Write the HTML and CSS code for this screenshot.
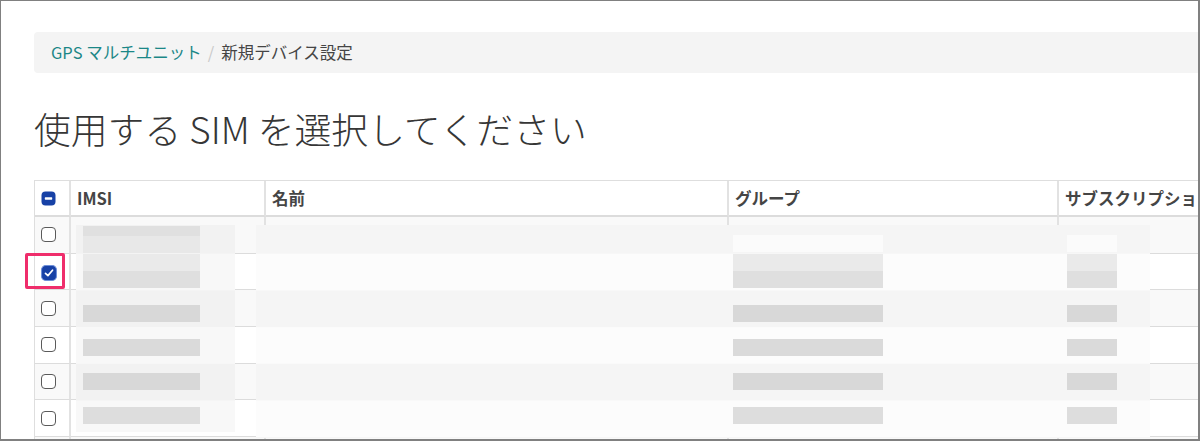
FILE: index.html
```html
<!DOCTYPE html>
<html lang="ja">
<head>
<meta charset="utf-8">
<title>新規デバイス設定</title>
<link rel="stylesheet" href="styles.css">
</head>
<body>
<div class="frame">
  <nav class="crumbs">
    <a class="crumb-link" href="#">GPS マルチユニット</a>
    <span class="sep">/</span>
    <span class="crumb-current">新規デバイス設定</span>
  </nav>

  <h1 class="title">使用する SIM を選択してください</h1>

  <div class="sim-table">
    <div class="row head">
      <div class="cell check">
        <svg class="cb" viewBox="0 0 15 15"><rect x="0.5" y="0.5" width="14" height="14" rx="4" fill="#1741a6"/><rect x="3.8" y="6.3" width="7.4" height="2.4" rx="0.6" fill="#fff"/></svg>
      </div>
      <div class="cell">IMSI</div>
      <div class="cell">名前</div>
      <div class="cell">グループ</div>
      <div class="cell">サブスクリプション</div>
    </div>

    <div class="row odd">
      <div class="cell check"><span class="box"></span></div>
      <div class="cell"></div><div class="cell"></div><div class="cell"></div><div class="cell"></div>
    </div>
    <div class="row">
      <div class="cell check">
        <svg class="cb checked" viewBox="0 0 15 15"><rect x="0.5" y="0.5" width="14" height="14" rx="4" fill="#1741a6" stroke="#6f8fd8" stroke-width="1"/><path d="M4.2 7.8 L6.5 10 L10.8 4.9" fill="none" stroke="#fff" stroke-width="1.6" stroke-linecap="round" stroke-linejoin="round"/></svg>
      </div>
      <div class="cell"></div><div class="cell"></div><div class="cell"></div><div class="cell"></div>
    </div>
    <div class="row odd">
      <div class="cell check"><span class="box"></span></div>
      <div class="cell"></div><div class="cell"></div><div class="cell"></div><div class="cell"></div>
    </div>
    <div class="row">
      <div class="cell check"><span class="box"></span></div>
      <div class="cell"></div><div class="cell"></div><div class="cell"></div><div class="cell"></div>
    </div>
    <div class="row odd">
      <div class="cell check"><span class="box"></span></div>
      <div class="cell"></div><div class="cell"></div><div class="cell"></div><div class="cell"></div>
    </div>
    <div class="row">
      <div class="cell check"><span class="box"></span></div>
      <div class="cell"></div><div class="cell"></div><div class="cell"></div><div class="cell"></div>
    </div>
    <div class="row odd">
      <div class="cell check"><span class="box"></span></div>
      <div class="cell"></div><div class="cell"></div><div class="cell"></div><div class="cell"></div>
    </div>

    <div class="redact redact-imsi">
      <div class="bar x-imsi r1 top-dark"></div>
      <div class="bar x-imsi r2 split"></div>
      <div class="bar x-imsi r3"></div>
      <div class="bar x-imsi r4"></div>
      <div class="bar x-imsi r5"></div>
      <div class="bar x-imsi r6"></div>
    </div>

    <div class="redact redact-rest">
      <div class="bar x-grp r1g faint"></div>
      <div class="bar x-grp r2 split"></div>
      <div class="bar x-grp r3"></div>
      <div class="bar x-grp r4"></div>
      <div class="bar x-grp r5"></div>
      <div class="bar x-grp r6"></div>
      <div class="bar x-sub r1g faint"></div>
      <div class="bar x-sub r2 split"></div>
      <div class="bar x-sub r3"></div>
      <div class="bar x-sub r4"></div>
      <div class="bar x-sub r5"></div>
      <div class="bar x-sub r6"></div>
    </div>

    <div class="highlight"></div>
  </div>
</div>
</body>
</html>
```

FILE: styles.css
```css
html, body {
  margin: 0;
  padding: 0;
  background: #fff;
}

.frame {
  width: 1200px;
  height: 441px;
  box-sizing: border-box;
  border: 1px solid #808080;
  border-right-width: 2px;
  border-bottom-width: 2px;
  overflow: hidden;
  padding: 31px 0 0 33px;
  background: #fff;
  font-family: "Noto Sans CJK JP", "Noto Sans", sans-serif;
}

/* breadcrumb */
.crumbs {
  width: 1240px;
  height: 41px;
  box-sizing: border-box;
  background: #f4f4f4;
  border-radius: 4px;
  display: flex;
  align-items: center;
  padding-left: 17px;
  font-size: 16.5px;
  line-height: 1;
}
.crumb-link {
  color: #1b8787;
  text-decoration: none;
}
.sep {
  color: #c9c9c9;
  margin: 0 7px 0 6px;
}
.crumb-current {
  color: #454545;
}

/* heading */
.title {
  margin: 33px 0 0;
  font-size: 36.8px;
  font-weight: 300;
  line-height: 45px;
  color: #363636;
}

/* table */
.sim-table {
  position: relative;
  margin-top: 29px;
  width: 1300px;
  border-top: 1px solid #dedede;
  border-left: 1px solid #dedede;
}
.row {
  display: grid;
  grid-template-columns: 36px 195px 463px 330px 276px;
  height: 36.7px;
}
.row.odd {
  background: #f9f9f9;
}
.row.head {
  height: 36px;
  background: #fff;
}
.cell {
  box-sizing: border-box;
  border-right: 2px solid #e2e2e2;
  border-bottom: 1px solid #dcdcdc;
  display: flex;
  align-items: center;
  padding-left: 6px;
  min-width: 0;
  white-space: nowrap;
  overflow: hidden;
}
.head .cell {
  border-bottom: 2px solid #dcdcdc;
  font-weight: 700;
  font-size: 16.5px;
  color: #454545;
}

/* checkboxes */
.box {
  display: block;
  width: 15px;
  height: 15px;
  box-sizing: border-box;
  border: 1.5px solid #5a5a5a;
  border-radius: 4px;
  background: #fff;
}
.cb {
  display: block;
  width: 15px;
  height: 15px;
}
.cb.checked {
  width: 16px;
  height: 16px;
  margin-left: -0.5px;
  margin-top: 3px;
}

/* redaction overlays (pixelated blur over data) */
.redact {
  position: absolute;
  top: 44px;
}
.redact-imsi {
  left: 41px;
  width: 159px;
  height: 207px;
  background: linear-gradient(#f2f2f2 50%, #f8f8f8 50%) 0 -8px / 100% 73.4px repeat-y;
}
.redact-rest {
  left: 221px;
  width: 894px;
  height: 213px;
  background: linear-gradient(#f5f5f5 50%, #fcfcfc 50%) 0 -8px / 100% 73.4px repeat-y;
}
.bar {
  position: absolute;
  height: 17px;
  background: #d8d8d8;
}
.x-imsi { left: 7px; width: 117px; }
.x-grp { left: 477px; width: 150px; }
.x-sub { left: 811px; width: 50px; }

.r1 { top: 1px; height: 27px; }
.r1g { top: 10px; }
.r2 { top: 29px; height: 34px; }
.r3 { top: 80px; }
.r4 { top: 114px; background: #dadada; }
.r5 { top: 148px; }
.r6 { top: 182px; background: #dddddd; }

.top-dark {
  background: linear-gradient(#e0e0e0 0 10px, #e8e8e8 10px);
}
.split {
  background: linear-gradient(#eaeaea 0 50%, #dfdfdf 50%);
}
.faint {
  background: #fbfbfb;
}

/* annotation box */
.highlight {
  position: absolute;
  left: -10px;
  top: 72px;
  width: 40px;
  height: 36px;
  box-sizing: border-box;
  border: 3px solid #ef2d6b;
  border-radius: 2px;
}
```
